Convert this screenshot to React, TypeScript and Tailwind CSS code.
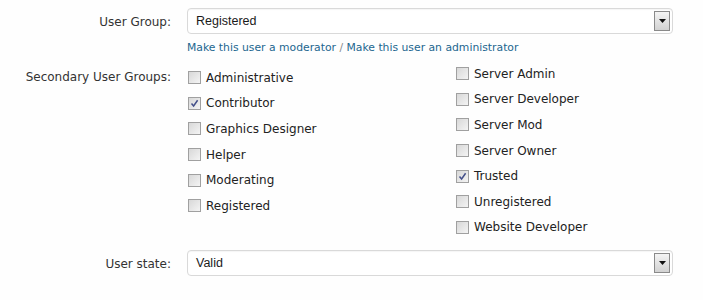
import React from "react";

function SelectBox({ value }: { value: string }) {
  return (
    <div className="relative ml-[16px] flex h-[26px] w-[486px] items-center rounded-[4px] border border-[#d9d9d9] bg-white shadow-[inset_0_1px_1px_rgba(0,0,0,0.04)]">
      <span className="pl-[8px] pt-[1px] font-['Liberation_Sans',sans-serif] text-[12.5px] text-[#1a1a1a]">{value}</span>
      <div className="absolute right-[2px] top-[2px] flex h-[20px] w-[16px] items-center justify-center border border-[#8a8a8a] bg-gradient-to-b from-[#f4f4f4] to-[#d2d2d2]">
        <svg width="7" height="4" viewBox="0 0 7 4">
          <path d="M0 0 H7 L3.5 4 Z" fill="#111" />
        </svg>
      </div>
    </div>
  );
}

function Check({ label, checked }: { label: string; checked?: boolean }) {
  return (
    <div className="flex h-[25.6px] items-center">
      <div className="flex h-[13px] w-[13px] items-center justify-center border border-[#a0a0a0] bg-gradient-to-br from-[#d8d8d8] to-[#f4f4f4]">
        {checked && (
          <svg width="9" height="9" viewBox="0 0 9 9">
            <path d="M1.5 4.5 L3.6 7 L7.6 1.2" fill="none" stroke="#44508a" strokeWidth="1.5" />
          </svg>
        )}
      </div>
      <span className="ml-[5px] text-[12px] text-[#222]">{label}</span>
    </div>
  );
}

export default function App() {
  const left = ["Administrative", "Contributor", "Graphics Designer", "Helper", "Moderating", "Registered"];
  const right = ["Server Admin", "Server Developer", "Server Mod", "Server Owner", "Trusted", "Unregistered", "Website Developer"];
  return (
    <div className="h-[300px] w-[703px] bg-[#fefefe] pt-[8px] font-['DejaVu_Sans',sans-serif] text-[12px] text-[#333]">
      <div className="flex items-center">
        <div className="w-[171px] pt-[1px] text-right">User Group:</div>
        <SelectBox value="Registered" />
      </div>
      <div className="ml-[187px] mt-[7px] h-[14px] text-[10.8px] leading-[14px] text-[#22668f]">
        <span>Make this user a moderator</span>
        <span className="text-[#8a8a8a]"> / </span>
        <span>Make this user an administrator</span>
      </div>
      <div className="mt-[6px] flex">
        <div className="w-[171px] pt-[4px] text-right leading-[25.6px]">Secondary User Groups:</div>
        <div className="ml-[17px] w-[268px] pt-[4px]">
          {left.map((l) => (
            <Check key={l} label={l} checked={l === "Contributor"} />
          ))}
        </div>
        <div>
          {right.map((l) => (
            <Check key={l} label={l} checked={l === "Trusted"} />
          ))}
        </div>
      </div>
      <div className="mt-[10px] flex items-center">
        <div className="w-[171px] pt-[1px] text-right">User state:</div>
        <SelectBox value="Valid" />
      </div>
    </div>
  );
}
